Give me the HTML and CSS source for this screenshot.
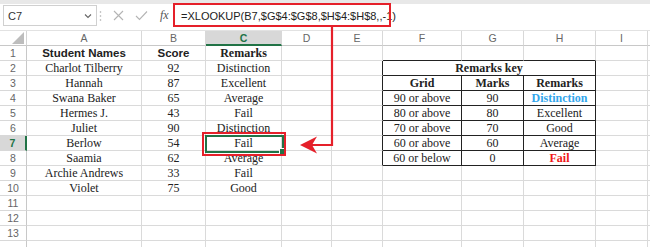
FILE: index.html
```html
<!DOCTYPE html>
<html>
<head>
<meta charset="utf-8">
<link rel="stylesheet" href="styles.css">
</head>
<body>
<div class="app">
  <div class="fbar">
    <div class="namebox"><span>C7</span>
      <svg width="8" height="6" viewBox="0 0 8 6"><polyline points="1,1.5 4,4.5 7,1.5" fill="none" stroke="#666" stroke-width="1.1"/></svg>
    </div>
    <svg class="dots" width="3" height="12" viewBox="0 0 3 12"><circle cx="1.5" cy="2" r="0.8" fill="#aaa"/><circle cx="1.5" cy="6" r="0.8" fill="#aaa"/><circle cx="1.5" cy="10" r="0.8" fill="#aaa"/></svg>
    <div class="fnbox">
      <svg width="11" height="11" viewBox="0 0 11 11"><path d="M1 1 L10 10 M10 1 L1 10" stroke="#b4b4b4" stroke-width="1.1" fill="none"/></svg>
      <svg width="13" height="11" viewBox="0 0 13 11"><polyline points="1,6 4.5,9.5 12,1.5" stroke="#b4b4b4" stroke-width="1.1" fill="none"/></svg>
      <span class="fx">fx</span>
    </div>
    <div class="formula">=XLOOKUP(B7,$G$4:$G$8,$H$4:$H$8,,-1)</div>
  </div>

  <div class="sheet">
    <div class="corner"><svg width="12" height="12" viewBox="0 0 12 12"><polygon points="12,0 12,12 0,12" fill="#bdbdbd"/></svg></div>
    <div class="ch">A</div><div class="ch">B</div><div class="ch sel">C</div><div class="ch">D</div><div class="ch">E</div><div class="ch">F</div><div class="ch">G</div><div class="ch">H</div><div class="ch">I</div><div class="ch end"></div>

    <div class="rh">1</div><div class="c b sans">Student Names</div><div class="c b sans">Score</div><div class="c b">Remarks</div><div class="c"></div><div class="c"></div><div class="c kt"></div><div class="c kt"></div><div class="c kt"></div><div class="c"></div><div class="c end"></div>

    <div class="rh">2</div><div class="c">Charlot Tilberry</div><div class="c">92</div><div class="c">Distinction</div><div class="c"></div><div class="c kl"></div><div class="c k b span3">Remarks key</div><div class="c"></div><div class="c end"></div>

    <div class="rh">3</div><div class="c">Hannah</div><div class="c">87</div><div class="c">Excellent</div><div class="c"></div><div class="c kl"></div><div class="c k b">Grid</div><div class="c k b">Marks</div><div class="c k b">Remarks</div><div class="c"></div><div class="c end"></div>

    <div class="rh">4</div><div class="c">Swana Baker</div><div class="c">65</div><div class="c">Average</div><div class="c"></div><div class="c kl"></div><div class="c k">90 or above</div><div class="c k">90</div><div class="c k b blue">Distinction</div><div class="c"></div><div class="c end"></div>

    <div class="rh">5</div><div class="c">Hermes J.</div><div class="c">43</div><div class="c">Fail</div><div class="c"></div><div class="c kl"></div><div class="c k">80 or above</div><div class="c k">80</div><div class="c k">Excellent</div><div class="c"></div><div class="c end"></div>

    <div class="rh">6</div><div class="c">Juliet</div><div class="c">90</div><div class="c">Distinction</div><div class="c"></div><div class="c kl"></div><div class="c k">70 or above</div><div class="c k">70</div><div class="c k">Good</div><div class="c"></div><div class="c end"></div>

    <div class="rh sel">7</div><div class="c">Berlow</div><div class="c">54</div><div class="c">Fail</div><div class="c"></div><div class="c kl"></div><div class="c k">60 or above</div><div class="c k">60</div><div class="c k">Average</div><div class="c"></div><div class="c end"></div>

    <div class="rh">8</div><div class="c">Saamia</div><div class="c">62</div><div class="c">Average</div><div class="c"></div><div class="c kl"></div><div class="c k">60 or below</div><div class="c k">0</div><div class="c k b red">Fail</div><div class="c"></div><div class="c end"></div>

    <div class="rh">9</div><div class="c">Archie Andrews</div><div class="c">33</div><div class="c">Fail</div><div class="c"></div><div class="c"></div><div class="c"></div><div class="c"></div><div class="c"></div><div class="c"></div><div class="c end"></div>

    <div class="rh">10</div><div class="c">Violet</div><div class="c">75</div><div class="c">Good</div><div class="c"></div><div class="c"></div><div class="c"></div><div class="c"></div><div class="c"></div><div class="c"></div><div class="c end"></div>

    <div class="rh">11</div><div class="c"></div><div class="c"></div><div class="c"></div><div class="c"></div><div class="c"></div><div class="c"></div><div class="c"></div><div class="c"></div><div class="c"></div><div class="c end"></div>
    <div class="rh">12</div><div class="c"></div><div class="c"></div><div class="c"></div><div class="c"></div><div class="c"></div><div class="c"></div><div class="c"></div><div class="c"></div><div class="c"></div><div class="c end"></div>
    <div class="rh">13</div><div class="c"></div><div class="c"></div><div class="c"></div><div class="c"></div><div class="c"></div><div class="c"></div><div class="c"></div><div class="c"></div><div class="c"></div><div class="c end"></div>
    <div class="rh"></div><div class="c"></div><div class="c"></div><div class="c"></div><div class="c"></div><div class="c"></div><div class="c"></div><div class="c"></div><div class="c"></div><div class="c"></div><div class="c end"></div>
  </div>

  <div class="selbox"><span class="handle"></span></div>
  <div class="redcell"></div>
  <div class="redformula"></div>
  <svg class="arrow" width="650" height="247" viewBox="0 0 650 247">
    <polyline points="332,26 332,145 312,145" fill="none" stroke="#e5202a" stroke-width="2.2"/>
    <polygon points="300,145 317,136.5 312,145 317,153.5" fill="#e5202a"/>
  </svg>
</div>
</body>
</html>
```
FILE: styles.css
```css
html, body {
  margin: 0;
  padding: 0;
  background: #fff;
}
.app {
  position: relative;
  width: 650px;
  height: 247px;
  overflow: hidden;
  font-family: "Liberation Serif", serif;
  color: #222;
}
.fbar {
  box-sizing: border-box;
  height: 31px;
  border-top: 4px solid #e8e8e8;
  border-bottom: 1px solid #e2e2e2;
  background: #fff;
  display: flex;
  align-items: center;
  padding: 0 0 3px 3px;
  font-family: "Liberation Sans", sans-serif;
}
.namebox {
  box-sizing: border-box;
  width: 94px;
  height: 21px;
  border: 1px solid #d0d0d0;
  display: flex;
  align-items: center;
  justify-content: space-between;
  padding: 0 4px 0 4px;
  font-size: 11px;
  color: #333;
}
.dots {
  margin: 0 3px 0 2px;
}
.fnbox {
  box-sizing: border-box;
  width: 68px;
  height: 21px;
  display: flex;
  align-items: center;
  padding-left: 8px;
  gap: 11px;
}
.fx {
  font-family: "Liberation Serif", serif;
  font-style: italic;
  font-size: 12px;
  color: #555;
  margin-left: 1px;
}
.formula {
  flex: 1;
  height: 21px;
  display: flex;
  align-items: center;
  padding-left: 8px;
  font-size: 11px;
  color: #222;
}
.sheet {
  display: grid;
  grid-template-columns: 27px 115px 64px 76px 50px 51px 79px 62px 72px 52px 2px;
  grid-auto-rows: 15px;
}
.corner {
  box-sizing: border-box;
  border-right: 1px solid #d4d4d4;
  border-bottom: 1px solid #c8c8c8;
  display: flex;
  align-items: flex-end;
  justify-content: flex-end;
  padding: 0 2px 1px 0;
}
.ch {
  box-sizing: border-box;
  border-right: 1px solid #d8d8d8;
  border-bottom: 1px solid #c8c8c8;
  font-family: "Liberation Sans", sans-serif;
  font-size: 10.5px;
  color: #666;
  text-align: center;
  line-height: 14px;
}
.ch.sel {
  background: #d8d8d8;
  color: #217346;
  font-weight: bold;
  border-bottom: 2px solid #217346;
}
.rh {
  box-sizing: border-box;
  border-right: 1px solid #c8c8c8;
  border-bottom: 1px solid #d8d8d8;
  font-family: "Liberation Sans", sans-serif;
  font-size: 10.5px;
  color: #666;
  text-align: center;
  line-height: 15px;
}
.rh.sel {
  background: #d8d8d8;
  color: #217346;
  font-weight: bold;
  border-right: 2px solid #217346;
}
.c {
  box-sizing: border-box;
  border-right: 1px solid #dadada;
  border-bottom: 1px solid #dadada;
  font-size: 12px;
  line-height: 15px;
  text-align: center;
  white-space: nowrap;
  overflow: visible;
}
.end {
  border-right: none;
}
.b {
  font-weight: bold;
}
.sans {
  font-family: "Liberation Sans", sans-serif;
  font-size: 11.5px;
}
.k {
  border-right: 1px solid #222;
  border-bottom: 1px solid #222;
}
.kt {
  border-bottom: 1px solid #222;
}
.kl {
  border-right: 1px solid #222;
}
.span3 {
  grid-column: span 3;
}
.blue {
  color: #33a6ec;
}
.red {
  color: #f01818;
}
.selbox {
  position: absolute;
  left: 205px;
  top: 135px;
  width: 75px;
  height: 14px;
  border: 2px solid #217346;
}
.handle {
  position: absolute;
  right: -4px;
  bottom: -4px;
  width: 5px;
  height: 5px;
  background: #217346;
  border: 1px solid #fff;
}
.redcell {
  position: absolute;
  left: 202px;
  top: 132px;
  width: 80px;
  height: 20px;
  border: 2px solid #e5202a;
}
.redformula {
  position: absolute;
  left: 173px;
  top: 3px;
  width: 214px;
  height: 20px;
  border: 2px solid #e5202a;
}
.arrow {
  position: absolute;
  left: 0;
  top: 0;
  pointer-events: none;
}
```
